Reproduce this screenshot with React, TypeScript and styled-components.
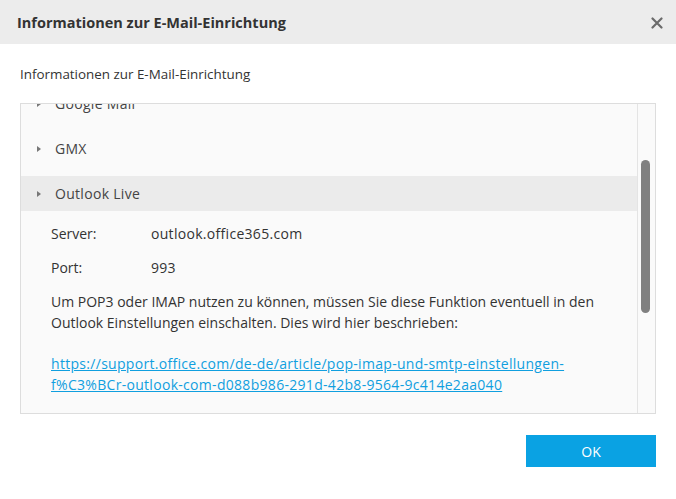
import { FC, useLayoutEffect, useRef } from 'react';
import styled, { createGlobalStyle } from 'styled-components';

const GlobalStyle = createGlobalStyle`
  html, body {
    margin: 0;
    padding: 0;
    background: #ffffff;
  }

  body {
    font-family: 'Open Sans', 'Noto Sans', sans-serif;
    color: #333333;
  }
`;

type Provider = {
  name: string;
  open?: boolean;
};

const providers: Provider[] = [
  { name: '1&1' },
  { name: 'Freenet' },
  { name: 'Google Mail' },
  { name: 'GMX' },
  { name: 'Outlook Live', open: true },
  { name: 'T-Online' },
  { name: 'Web.de' },
  { name: 'Yahoo Mail' },
  { name: 'iCloud' },
];

const Dialog = styled.div`
  width: 676px;
  height: 499px;
  display: flex;
  flex-direction: column;
  background: #ffffff;
`;

const Header = styled.header`
  height: 44px;
  flex: none;
  display: flex;
  align-items: center;
  justify-content: space-between;
  padding: 0 9px 0 17px;
  background: #ececec;
`;

const Title = styled.h1`
  margin: 0;
  font-size: 14.5px;
  font-weight: 700;
  color: #333333;
`;

const CloseButton = styled.button`
  width: 20px;
  height: 20px;
  padding: 0;
  border: 0;
  background: none;
  display: flex;
  align-items: center;
  justify-content: center;
  cursor: pointer;
  margin-top: 2px;
`;

const Body = styled.div`
  display: flex;
  flex-direction: column;
  padding: 21px 20px 0;
`;

const Subtitle = styled.p`
  margin: 0 0 20px;
  font-size: 13.4px;
  line-height: 18px;
`;

const ListBox = styled.div`
  height: 309px;
  display: flex;
  border: 1px solid #dddddd;
  background: #fafafa;
`;

const Viewport = styled.div`
  flex: 1;
  overflow: hidden;
`;

const ScrollTrack = styled.div`
  width: 14px;
  flex: none;
  border-left: 1px solid #e4e4e4;
  padding: 56px 0 0 3px;
`;

const ScrollThumb = styled.div`
  width: 9px;
  height: 153px;
  border-radius: 5px;
  background: #808080;
`;

const List = styled.div`
  padding: 5px 0 14px;
  display: flex;
  flex-direction: column;
  gap: 10px;
`;

const Row = styled.div<{ $open?: boolean }>`
  height: 35px;
  display: flex;
  align-items: center;
  gap: 14px;
  padding-left: 16px;
  font-size: 14px;
  letter-spacing: 0.3px;
  color: #444444;
  background: ${(p) => (p.$open ? '#ebebeb' : 'transparent')};
`;

const Caret = styled.span`
  width: 0;
  height: 0;
  border-top: 3.5px solid transparent;
  border-bottom: 3.5px solid transparent;
  border-left: 4px solid #777777;
`;

const Details = styled.div`
  padding: 12px 30px 16px;
  font-size: 14px;
  line-height: 21px;
  color: #333333;
  display: flex;
  flex-direction: column;
`;

const Field = styled.div`
  display: flex;
  margin-bottom: 13px;
`;

const Label = styled.span`
  width: 100px;
  flex: none;
`;

const Value = styled.span`
  letter-spacing: 0.3px;
`;

const Text = styled.p`
  margin: 0 0 20px;
`;

const Link = styled.a`
  color: #109fdf;
  text-decoration: underline;
  letter-spacing: 0.3px;
  word-break: break-word;
`;

const Footer = styled.footer`
  display: flex;
  justify-content: flex-end;
  padding: 21px 20px 0;
`;

const OkButton = styled.button`
  width: 130px;
  height: 32px;
  border: 0;
  background: #0aa2e3;
  color: #ffffff;
  font-family: inherit;
  font-size: 14px;
  cursor: pointer;
`;

const ProviderRow: FC<Provider> = ({ name, open }) => (
  <div>
    <Row $open={open}>
      <Caret />
      {name}
    </Row>
    {open && (
      <Details>
        <Field>
          <Label>Server:</Label>
          <Value>outlook.office365.com</Value>
        </Field>
        <Field>
          <Label>Port:</Label>
          <Value>993</Value>
        </Field>
        <Text>
          Um POP3 oder IMAP nutzen zu können, müssen Sie diese Funktion eventuell in den
          Outlook Einstellungen einschalten. Dies wird hier beschrieben:
        </Text>
        <Link href="#">
          https://support.office.com/de-de/article/pop-imap-und-smtp-einstellungen-f%C3%BCr-outlook-com-d088b986-291d-42b8-9564-9c414e2aa040
        </Link>
      </Details>
    )}
  </div>
);

const App: FC = () => {
  const viewportRef = useRef<HTMLDivElement>(null);

  useLayoutEffect(() => {
    if (viewportRef.current) viewportRef.current.scrollTop = 113;
  }, []);

  return (
    <>
      <GlobalStyle />
      <Dialog>
        <Header>
          <Title>Informationen zur E-Mail-Einrichtung</Title>
          <CloseButton aria-label="Schließen">
            <svg width="12" height="12" viewBox="0 0 12 12">
              <path d="M1.5 1.5l9 9M10.5 1.5l-9 9" stroke="#6b6b6b" strokeWidth="2.2" strokeLinecap="round" />
            </svg>
          </CloseButton>
        </Header>
        <Body>
          <Subtitle>Informationen zur E-Mail-Einrichtung</Subtitle>
          <ListBox>
            <Viewport ref={viewportRef}>
              <List>
                {providers.map((p) => (
                  <ProviderRow key={p.name} {...p} />
                ))}
              </List>
            </Viewport>
            <ScrollTrack>
              <ScrollThumb />
            </ScrollTrack>
          </ListBox>
        </Body>
        <Footer>
          <OkButton>OK</OkButton>
        </Footer>
      </Dialog>
    </>
  );
};

export default App;
